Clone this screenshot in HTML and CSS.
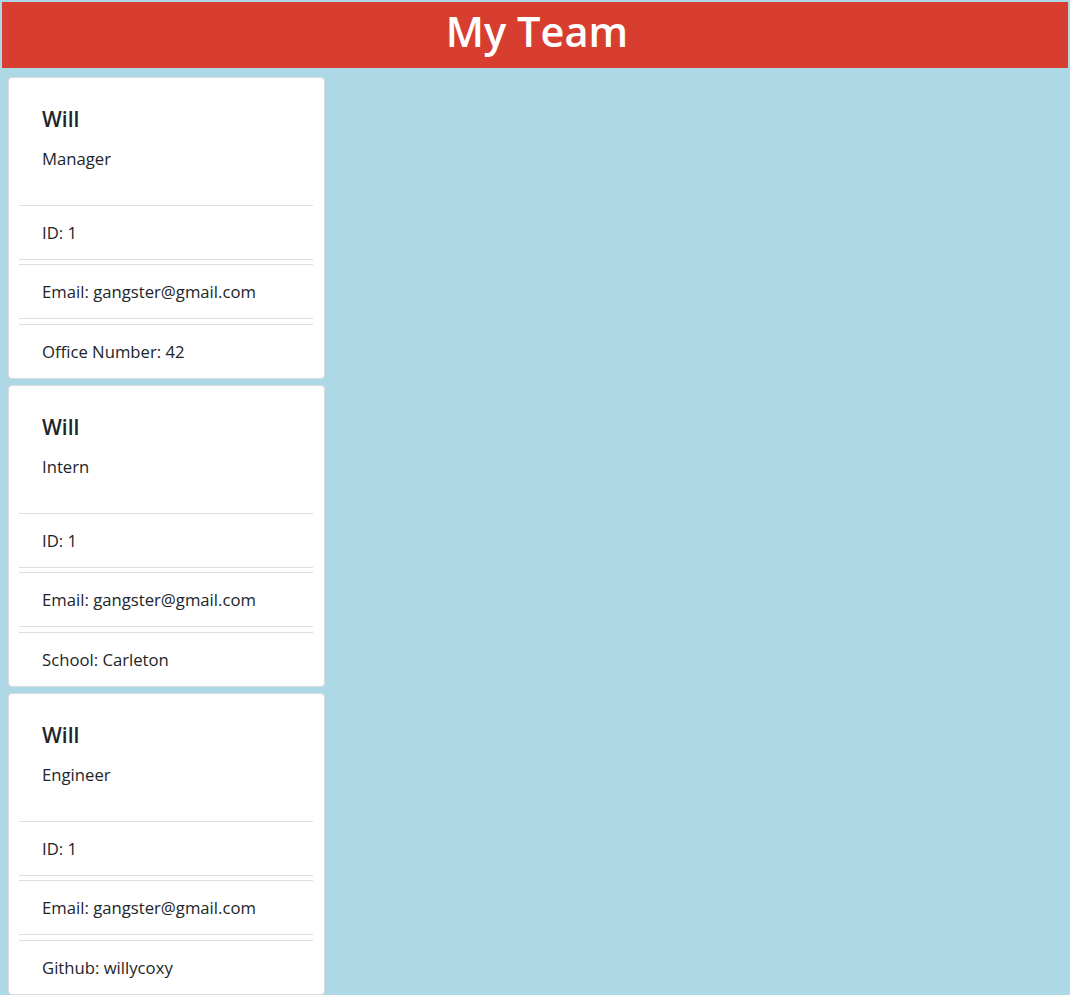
FILE: index.html
```html
<!DOCTYPE html>
<html lang="en">
<head>
<meta charset="utf-8">
<title>My Team</title>
<link rel="stylesheet" href="styles.css">
</head>
<body>
<header class="banner"><h1 class="banner-title">My Team</h1></header>
<main class="team">
  <section class="card">
    <div class="card-body">
      <h5 class="card-title">Will</h5>
      <p class="card-role">Manager</p>
    </div>
    <ul class="list">
      <li class="list-item">ID: 1</li>
      <li class="list-item">Email: gangster@gmail.com</li>
      <li class="list-item">Office Number: 42</li>
    </ul>
  </section>
  <section class="card">
    <div class="card-body">
      <h5 class="card-title">Will</h5>
      <p class="card-role">Intern</p>
    </div>
    <ul class="list">
      <li class="list-item">ID: 1</li>
      <li class="list-item">Email: gangster@gmail.com</li>
      <li class="list-item">School: Carleton</li>
    </ul>
  </section>
  <section class="card">
    <div class="card-body">
      <h5 class="card-title">Will</h5>
      <p class="card-role">Engineer</p>
    </div>
    <ul class="list">
      <li class="list-item">ID: 1</li>
      <li class="list-item">Email: gangster@gmail.com</li>
      <li class="list-item">Github: willycoxy</li>
    </ul>
  </section>
</main>
</body>
</html>
```
FILE: styles.css
```css
html, body {
  margin: 0;
  padding: 0;
  background: #add8e6;
}
body {
  padding: 2px;
  font-family: "Open Sans", "Noto Sans", sans-serif;
  font-size: 16.7px;
  color: #212529;
}
.banner {
  background: #d73e2f;
  height: 66px;
  display: flex;
  justify-content: center;
  align-items: flex-start;
}
.banner-title {
  margin: 0 0 0 4px;
  padding-top: 6px;
  color: #fff;
  font-size: 41.5px;
  font-weight: 600;
  line-height: 46px;
}
.team {
  display: flex;
  flex-direction: column;
  gap: 6px;
  padding: 9px 0 0 6px;
}
.card {
  width: 315px;
  height: 300px;
  background: #fff;
  border: 1px solid #dadada;
  border-radius: 4px;
  display: flex;
  flex-direction: column;
  overflow: hidden;
}
.card-body {
  padding: 29px 0 0 33px;
  height: 97px;
  box-sizing: border-box;
  flex: none;
}
.card-title {
  margin: 0 0 16px;
  font-size: 21px;
  font-weight: 600;
  line-height: 24px;
}
.card-role {
  margin: 0;
  line-height: 24px;
}
.list {
  list-style: none;
  margin: 30px 11px 0 10px;
  padding: 0;
  display: flex;
  flex-direction: column;
  gap: 4.4px;
}
.list-item {
  height: 53px;
  border-top: 1px solid #dedede;
  border-bottom: 1px solid #dedede;
  padding-left: 23px;
  display: flex;
  align-items: center;
}
.list-item:last-child {
  border-bottom: none;
}
```
